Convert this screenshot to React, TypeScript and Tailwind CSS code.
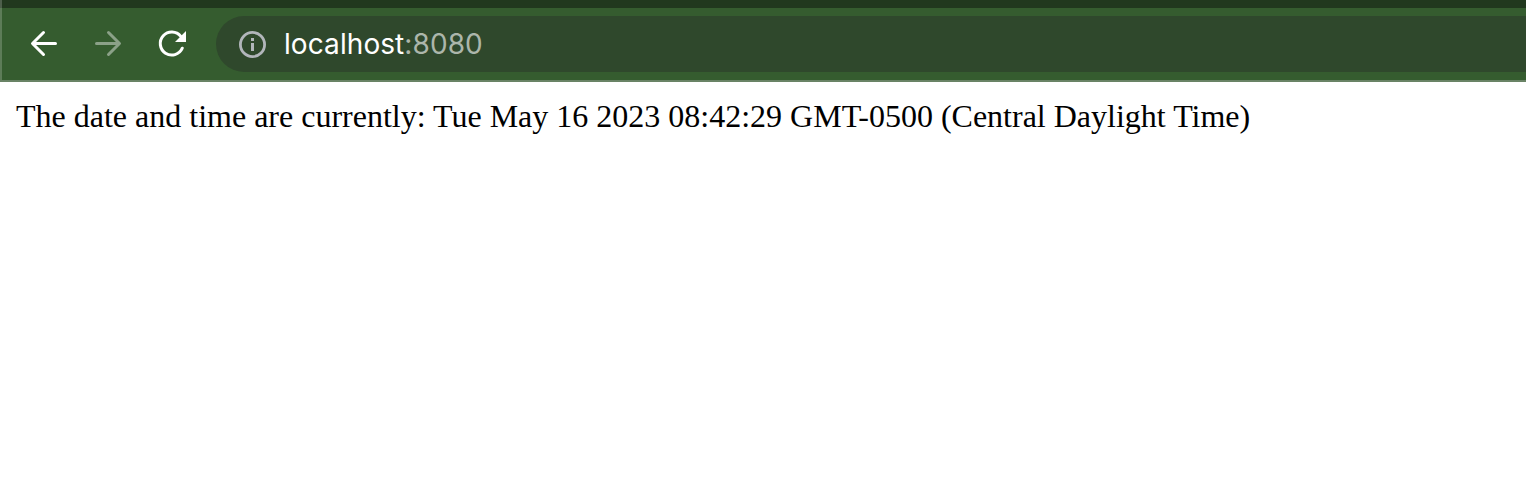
function BackIcon() {
  return (
    <svg width="28" height="28" viewBox="0 0 28 28" fill="none" stroke="#ffffff" strokeWidth="3" strokeLinecap="round" strokeLinejoin="round">
      <path d="M25.5 13.5H3M13.5 2.5L2.5 13.5L13.5 24.5" />
    </svg>
  );
}

function ForwardIcon() {
  return (
    <svg width="28" height="28" viewBox="0 0 28 28" fill="none" stroke="#8ba188" strokeWidth="3" strokeLinecap="round" strokeLinejoin="round">
      <path d="M2.5 13.5H25M14.5 2.5L25.5 13.5L14.5 24.5" />
    </svg>
  );
}

function ReloadIcon() {
  return (
    <svg width="28" height="28" viewBox="0 0 28 28" fill="none">
      <path d="M24.3 18.2A11.5 11.5 0 1 1 22.8 6.4" stroke="#ffffff" strokeWidth="3" strokeLinecap="round" />
      <path d="M28 1V12H17Z" fill="#ffffff" />
    </svg>
  );
}

function InfoIcon() {
  return (
    <svg width="28" height="28" viewBox="0 0 28 28" fill="none">
      <circle cx="13.5" cy="14.5" r="12.1" stroke="#b2b6bb" strokeWidth="2.8" />
      <path d="M12 8h3v3h-3zM12 13h3v8h-3z" fill="#b2b6bb" />
    </svg>
  );
}

export default function App() {
  return (
    <div className="flex h-[488px] w-full flex-col overflow-hidden bg-white">
      <header className="relative flex h-[82px] shrink-0 flex-col border-b-2 border-[#698365] bg-[#355c2f]">
        <div className="h-2 shrink-0 bg-[#21381e]" />
        <div className="flex h-[72px] items-center">
          <nav className="flex w-[216px] shrink-0 gap-9 pl-[30px]">
            <button type="button" aria-label="Back"><BackIcon /></button>
            <button type="button" aria-label="Forward"><ForwardIcon /></button>
            <button type="button" aria-label="Reload"><ReloadIcon /></button>
          </nav>
          <div className="flex h-14 flex-1 items-center rounded-l-full bg-[#2f482c] pl-[23px]">
            <InfoIcon />
            <span className="ml-[17px] font-['Inter',sans-serif] text-[28px] leading-none tracking-[0.08px] text-white">
              localhost<span className="text-[#acb6ab]">:8080</span>
            </span>
          </div>
        </div>
        <div className="absolute left-0 top-0 h-20 w-0.5 bg-white/20" />
      </header>
      <main className="px-4 pt-4">
        <p className="whitespace-nowrap font-['Liberation_Serif',serif] text-[32px] leading-[37px] text-black">
          The date and time are currently: Tue May 16 2023 08:42:29 GMT-0500 (Central Daylight Time)
        </p>
      </main>
    </div>
  );
}
